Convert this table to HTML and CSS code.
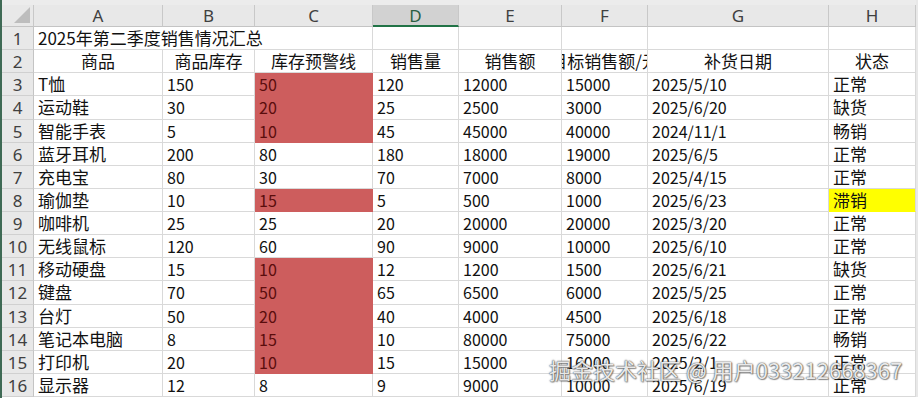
FILE: index.html
```html
<!DOCTYPE html>
<html lang="zh">
<head>
<meta charset="utf-8">
<title>2025年第二季度销售情况汇总</title>
<link rel="stylesheet" href="styles.css">
</head>
<body>
<div class="sheet">
  <div class="corner"><span class="tri"></span></div>
  <div class="ch">A</div><div class="ch">B</div><div class="ch">C</div><div class="ch sel">D</div><div class="ch">E</div><div class="ch">F</div><div class="ch">G</div><div class="ch">H</div><div class="gap"></div>

  <div class="rn">1</div><div class="c z span3">2025年第二季度销售情况汇总</div><div class="c"></div><div class="c"></div><div class="c"></div><div class="c"></div><div class="c"></div><div class="gap"></div>

  <div class="rn">2</div><div class="c z ctr">商品</div><div class="c z ctr">商品库存</div><div class="c z ctr">库存预警线</div><div class="c z ctr">销售量</div><div class="c z ctr">销售额</div><div class="c z ctr clip"><span>目标销售额/元</span></div><div class="c z ctr">补货日期</div><div class="c z ctr">状态</div><div class="gap"></div>

  <div class="rn">3</div><div class="c z">T恤</div><div class="c">150</div><div class="c red">50</div><div class="c">120</div><div class="c">12000</div><div class="c">15000</div><div class="c">2025/5/10</div><div class="c z">正常</div><div class="gap"></div>
  <div class="rn">4</div><div class="c z">运动鞋</div><div class="c">30</div><div class="c red">20</div><div class="c">25</div><div class="c">2500</div><div class="c">3000</div><div class="c">2025/6/20</div><div class="c z">缺货</div><div class="gap"></div>
  <div class="rn">5</div><div class="c z">智能手表</div><div class="c">5</div><div class="c red">10</div><div class="c">45</div><div class="c">45000</div><div class="c">40000</div><div class="c">2024/11/1</div><div class="c z">畅销</div><div class="gap"></div>
  <div class="rn">6</div><div class="c z">蓝牙耳机</div><div class="c">200</div><div class="c">80</div><div class="c">180</div><div class="c">18000</div><div class="c">19000</div><div class="c">2025/6/5</div><div class="c z">正常</div><div class="gap"></div>
  <div class="rn">7</div><div class="c z">充电宝</div><div class="c">80</div><div class="c">30</div><div class="c">70</div><div class="c">7000</div><div class="c">8000</div><div class="c">2025/4/15</div><div class="c z">正常</div><div class="gap"></div>
  <div class="rn">8</div><div class="c z">瑜伽垫</div><div class="c">10</div><div class="c red">15</div><div class="c">5</div><div class="c">500</div><div class="c">1000</div><div class="c">2025/6/23</div><div class="c z yel">滞销</div><div class="gap"></div>
  <div class="rn">9</div><div class="c z">咖啡机</div><div class="c">25</div><div class="c">25</div><div class="c">20</div><div class="c">20000</div><div class="c">20000</div><div class="c">2025/3/20</div><div class="c z">正常</div><div class="gap"></div>
  <div class="rn">10</div><div class="c z">无线鼠标</div><div class="c">120</div><div class="c">60</div><div class="c">90</div><div class="c">9000</div><div class="c">10000</div><div class="c">2025/6/10</div><div class="c z">正常</div><div class="gap"></div>
  <div class="rn">11</div><div class="c z">移动硬盘</div><div class="c">15</div><div class="c red">10</div><div class="c">12</div><div class="c">1200</div><div class="c">1500</div><div class="c">2025/6/21</div><div class="c z">缺货</div><div class="gap"></div>
  <div class="rn">12</div><div class="c z">键盘</div><div class="c">70</div><div class="c red">50</div><div class="c">65</div><div class="c">6500</div><div class="c">6000</div><div class="c">2025/5/25</div><div class="c z">正常</div><div class="gap"></div>
  <div class="rn">13</div><div class="c z">台灯</div><div class="c">50</div><div class="c red">20</div><div class="c">40</div><div class="c">4000</div><div class="c">4500</div><div class="c">2025/6/18</div><div class="c z">正常</div><div class="gap"></div>
  <div class="rn">14</div><div class="c z">笔记本电脑</div><div class="c">8</div><div class="c red">15</div><div class="c">10</div><div class="c">80000</div><div class="c">75000</div><div class="c">2025/6/22</div><div class="c z">畅销</div><div class="gap"></div>
  <div class="rn">15</div><div class="c z">打印机</div><div class="c">20</div><div class="c red">10</div><div class="c">15</div><div class="c">15000</div><div class="c">16000</div><div class="c">2025/2/1</div><div class="c z">正常</div><div class="gap"></div>
  <div class="rn">16</div><div class="c z">显示器</div><div class="c">12</div><div class="c">8</div><div class="c">9</div><div class="c">9000</div><div class="c">10000</div><div class="c">2025/6/19</div><div class="c z">正常</div><div class="gap"></div>

  <div class="watermark">掘金技术社区 @ 用户033212668367</div>
</div>
</body>
</html>
```

FILE: styles.css
```css
html, body {
  margin: 0;
  padding: 0;
  background: #ffffff;
}

.sheet {
  position: relative;
  width: 918px;
  height: 398px;
  overflow: hidden;
  box-sizing: border-box;
  border-left: 2px solid #3f6a55;
  display: grid;
  grid-template-columns: 32px 129px 92px 118px 86px 103px 86px 181px 87px 2px;
  grid-template-rows: 27px repeat(16, 23.125px);
  font-family: "Noto Sans CJK SC", "Noto Sans", sans-serif;
  font-size: 16px;
  color: #111111;
  background: linear-gradient(#ececec 0 5px, #ffffff 5px);
}

.corner {
  position: relative;
  margin-top: 5px;
  background: #e8e8e8;
  border-right: 1px solid #c8c8c8;
  border-bottom: 1px solid #c4c4c4;
  box-sizing: border-box;
}

.tri {
  position: absolute;
  right: 3px;
  bottom: 3px;
  width: 0;
  height: 0;
  border-left: 16px solid transparent;
  border-bottom: 16px solid #bdbdbd;
}

.ch {
  margin-top: 5px;
  background: #e8e8e8;
  border-right: 1px solid #c8c8c8;
  border-bottom: 1px solid #c4c4c4;
  box-sizing: border-box;
  text-align: center;
  color: #404040;
  font-family: "Noto Sans", "Liberation Sans", sans-serif;
  font-size: 17px;
  line-height: 21px;
}

.ch.sel {
  background: #d2d2d2;
  color: #2b5e43;
  border-bottom: 2px solid #217346;
}

.gap {
  background: #e8e8e8;
}

.rn {
  background: #e8e8e8;
  border-right: 1px solid #c4c4c4;
  border-bottom: 1px solid #d0d0d0;
  box-sizing: border-box;
  text-align: center;
  color: #404040;
  font-family: "Noto Sans", "Liberation Sans", sans-serif;
  font-size: 17px;
  line-height: 23px;
}

.c {
  border-right: 1px solid #d9d9d9;
  border-bottom: 1px solid #d9d9d9;
  box-sizing: border-box;
  padding: 0 4px;
  line-height: 22px;
  white-space: nowrap;
}

.z {
  font-size: 17px;
}

.span3 {
  grid-column: span 3;
}

.ctr {
  text-align: center;
}

.clip {
  display: flex;
  justify-content: center;
  padding: 0;
  overflow: hidden;
}

.clip span {
  flex: none;
}

.red {
  background: #cd5d5d;
  color: #5a0d0d;
  border-right-color: #cd5d5d;
  border-bottom-color: #cd5d5d;
}

.yel {
  background: #ffff00;
  border-bottom-color: #ffff00;
}

.watermark {
  position: absolute;
  left: 547px;
  top: 352px;
  font-family: "Noto Sans CJK SC", "Noto Sans", sans-serif;
  font-size: 22px;
  line-height: 34px;
  color: rgba(255, 255, 255, 0.88);
  text-shadow: 0 0 1px #444444, 0 0 2px #666666, 1px 1px 1px rgba(0, 0, 0, 0.35);
  white-space: nowrap;
}
```
